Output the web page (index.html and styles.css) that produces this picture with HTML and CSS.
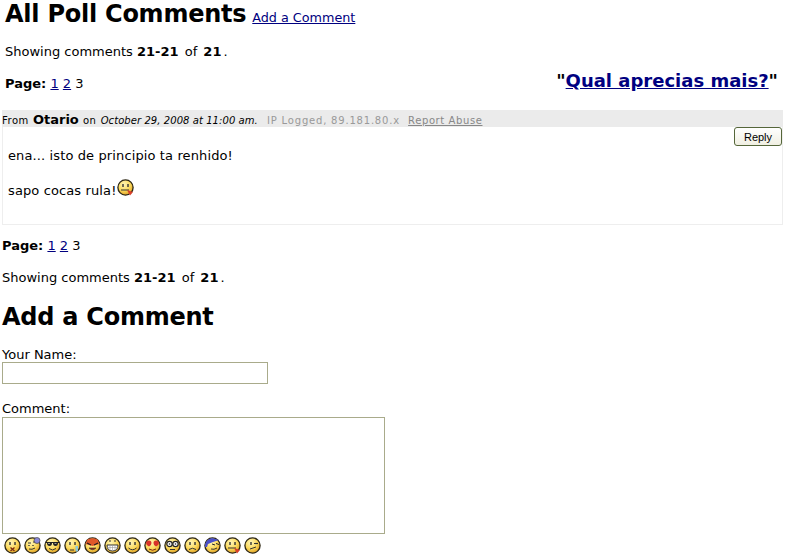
FILE: index.html
```html
<!DOCTYPE html>
<html lang="en">
  <head>
    <meta charset="UTF-8" />
    <title>All Poll Comments</title>
    <link rel="stylesheet" href="styles.css">
  </head>
  <body>
    <svg class="defs" width="0" height="0">
      <defs>
        <radialGradient id="skin" cx="0.4" cy="0.3" r="0.75">
          <stop offset="0" stop-color="#fff6b8" />
          <stop offset="0.55" stop-color="#fbd95c" />
          <stop offset="1" stop-color="#dc9a1e" />
        </radialGradient>
      </defs>
      <symbol id="face" viewBox="0 0 17 17">
        <circle cx="8.5" cy="8.5" r="7.6" fill="url(#skin)" stroke="#2c2614" stroke-width="1.3" />
      </symbol>
    </svg>

    <div class="top">
      <div class="title-row">
        <h1>All Poll Comments</h1>
        <a class="add-link" href="#add">Add a Comment</a>
      </div>
      <p class="showing">Showing comments <b>21-21</b> of <b>21</b>.</p>
      <div class="page-row">
        <p class="pages"><b>Page:</b> <a href="#1">1</a> <a href="#2">2</a> 3</p>
        <h2 class="poll-name">"<a href="#poll">Qual aprecias mais?</a>"</h2>
      </div>
    </div>

    <div class="comment">
      <div class="comment-head">
        <span class="from">From</span> <span class="author">Otario</span> <span class="from">on</span> <i>October 29, 2008 at 11:00 am.</i>
        <span class="ip">IP Logged, 89.181.80.x</span>
        <a class="abuse" href="#abuse">Report Abuse</a>
      </div>
      <div class="comment-body">
        <button class="reply-btn">Reply</button>
        <p>ena... isto de principio ta renhido!</p>
        <p>sapo cocas rula!<svg class="smiley inline" viewBox="0 0 17 17"><use href="#face" /><path d="M6 5v3M11 5v3" stroke="#333" stroke-width="1.4" /><path d="M4 11h8" stroke="#333" /><path d="M10 11l6 2-3 3.500z" fill="#d8402a" /></svg></p>
      </div>
    </div>

    <p class="pages lower"><b>Page:</b> <a href="#1">1</a> <a href="#2">2</a> 3</p>
    <p class="showing lower-showing">Showing comments <b>21-21</b> of <b>21</b>.</p>

    <form class="add-form" id="add">
      <h1>Add a Comment</h1>
      <label class="field-label">Your Name:</label>
      <input class="name-input" type="text" />
      <label class="field-label comment-label">Comment:</label>
      <textarea class="comment-input"></textarea>
      <div class="smileys">
        <svg class="smiley" viewBox="0 0 17 17"><use href="#face" /><path d="M6 5v3M11 5v3" stroke="#333" stroke-width="1.4" /><path d="M6.500 10.500l4 3.500M10.500 10.500l-4 3.500" stroke="#7a2a10" stroke-width="1.300" /></svg>
        <svg class="smiley" viewBox="0 0 17 17"><use href="#face" /><path d="M4 6h3M9 5h2" stroke="#333" /><path d="M5 8v1M9 8v1" stroke="#333" stroke-width="1.400" /><path d="M5 12q3 1 6-1" stroke="#333" fill="none" /><circle cx="13" cy="3.500" r="3" fill="#8a88d8" stroke="#444" stroke-width="0.700" /></svg>
        <svg class="smiley" viewBox="0 0 17 17"><use href="#face" /><path d="M2 5h13v1h-1q0 3-2.500 3t-2.500-3h-1q0 3-2.500 3t-2.500-3h-1z" fill="#222" /><path d="M4 6.500h2M10.500 6.500h2" stroke="#9a9a9a" /><path d="M5 11.500q3.500 3 7 0" stroke="#333" fill="none" /></svg>
        <svg class="smiley" viewBox="0 0 17 17"><use href="#face" /><path d="M6 5v3M11 5v3" stroke="#333" stroke-width="1.400" /><path d="M6 13h4" stroke="#333" /><path d="M11.500 9h2.500v5q-1 1.500-2.500 0z" fill="#8cc8d8" /></svg>
        <svg class="smiley" viewBox="0 0 17 17"><use href="#face" /><path d="M1.500 7l2-4.500q5-2.500 10 0l2 4.500-7 2z" fill="#e0582a" /><path d="M3 6l4 2M14 6l-4 2" stroke="#222" stroke-width="1.300" /><path d="M5 11q3.500 3.500 7 0z" fill="#8e2414" stroke="#333" stroke-width="0.600" /></svg>
        <svg class="smiley" viewBox="0 0 17 17"><use href="#face" /><path d="M5 4h2M10 4h2" stroke="#333" stroke-width="1.200" /><path d="M3 8h11q0 6-5.500 6t-5.500-6z" fill="#fff" stroke="#333" /><path d="M3.500 10.500h10M6 8v5M8.500 8v6M11 8v5" stroke="#999" stroke-width="0.600" /></svg>
        <svg class="smiley" viewBox="0 0 17 17"><use href="#face" /><path d="M6 5v3M11 5v3" stroke="#333" stroke-width="1.400" /><path d="M4.500 11q4 3.500 8 0" stroke="#333" fill="none" /></svg>
        <svg class="smiley" viewBox="0 0 17 17"><use href="#face" /><path d="M5 3.500q2.500 0 2.500 2.500t-2.500 3.500q-3-1.500-3-3.500t3-2.500zM12 3.500q-2.500 0-2.500 2.500t2.500 3.500q3-1.500 3-3.500t-3-2.500z" fill="#d8322a" /><path d="M5 12q3.500 2.500 7 0" stroke="#7a2a10" fill="none" /></svg>
        <svg class="smiley" viewBox="0 0 17 17"><use href="#face" /><circle cx="5.500" cy="7" r="2.700" fill="#fff" stroke="#222" stroke-width="1.200" /><circle cx="11.500" cy="7" r="2.700" fill="#fff" stroke="#222" stroke-width="1.200" /><circle cx="5.500" cy="7" r="0.800" fill="#222" /><circle cx="11.500" cy="7" r="0.800" fill="#222" /><path d="M6 12.500h5" stroke="#333" /></svg>
        <svg class="smiley" viewBox="0 0 17 17"><use href="#face" /><path d="M6 5v3M11 5v3" stroke="#333" stroke-width="1.400" /><path d="M5 12.500q3.500-2.500 7 0" stroke="#333" fill="none" /></svg>
        <svg class="smiley" viewBox="0 0 17 17"><use href="#face" /><path d="M1 10q-.5-7 7-9l7 2-6 2-5 2-1 3z" fill="#4a50c8" /><path d="M8 7l3 1M12 6.500l3 1" stroke="#222" /><path d="M7 12q3 1 6-1" stroke="#333" fill="none" /></svg>
        <svg class="smiley" viewBox="0 0 17 17"><use href="#face" /><path d="M6 5v3M11 5v3" stroke="#333" stroke-width="1.400" /><path d="M4 11h8" stroke="#333" /><path d="M10 11l6 2-3 3.500z" fill="#d8402a" /></svg>
        <svg class="smiley" viewBox="0 0 17 17"><use href="#face" /><path d="M7 5v3" stroke="#333" stroke-width="1.400" /><path d="M10 6.500h4" stroke="#333" stroke-width="1.200" /><path d="M6 12l6-2" stroke="#333" /></svg>
      </div>
    </form>
  </body>
</html>
```

FILE: styles.css
```css
/* Basic Reset */
* {
  margin: 0;
  padding: 0;
  box-sizing: border-box;
}

body {
  width: 785px;
  font-family: "DejaVu Sans", Verdana, sans-serif;
  font-size: 13px;
  color: #000;
  background: #fff;
  overflow: hidden;
}

a {
  color: #000080;
}

h1 {
  font-size: 24px;
  line-height: 28px;
  letter-spacing: -0.25px;
}

.defs {
  position: absolute;
}

.top {
  padding-left: 5px;
}

.title-row {
  display: flex;
  align-items: baseline;
  gap: 6px;
  height: 28px;
}

.add-link {
  font-size: 12.75px;
}

.showing {
  margin-top: 16px;
  line-height: 16px;
}

.showing b {
  margin-right: 2px;
}

.showing b + b {
  margin-left: 2px;
}

.page-row {
  display: flex;
  justify-content: space-between;
  align-items: center;
  margin-top: 11px;
  height: 24px;
}

.poll-name {
  font-size: 18px;
  line-height: 24px;
  margin: -4px 7px 0 0;
}

.comment {
  margin: 15px 2px 0;
  border: 1px solid #eee;
  border-top: 0;
}

.comment-head {
  height: 17px;
  margin: 0 -1px;
  background: #ebebeb;
  font-size: 10px;
  line-height: 19px;
  white-space: nowrap;
}

.from {
  letter-spacing: 0.5px;
}

.author {
  font-size: 13px;
  font-weight: bold;
  margin: 0 1px;
}

.comment-head i {
  letter-spacing: 0.07px;
  margin-left: 1px;
}

.ip {
  margin-left: 6px;
  color: #999;
  letter-spacing: 0.8px;
}

.abuse {
  margin-left: 5px;
  color: #888;
  letter-spacing: 0.6px;
}

.comment-body {
  height: 97px;
  padding: 0 5px;
}

.comment-body p {
  line-height: 16px;
  margin-bottom: 15px;
  letter-spacing: 0.12px;
}

.comment-body p:first-of-type {
  padding-top: 21px;
}

.reply-btn {
  float: right;
  width: 48px;
  height: 19px;
  margin: 0 -5px 0 0;
  border: 1px solid #55663a;
  border-radius: 3px;
  background: linear-gradient(#fff, #f0efe2);
  font-family: "Liberation Sans", sans-serif;
  font-size: 11px;
}

.smiley {
  width: 17px;
  height: 17px;
  flex: none;
}

.smiley.inline {
  vertical-align: -1px;
}

.lower {
  margin: 13px 0 0 2px;
  line-height: 16px;
}

.lower-showing {
  margin: 16px 0 0 2px;
}

.add-form {
  padding-left: 2px;
  margin-top: 17px;
}

.field-label {
  display: block;
  line-height: 15px;
}

.add-form h1 {
  margin-bottom: 16px;
}

.name-input {
  display: block;
  width: 266px;
  height: 22px;
  border: 1px solid #a9ab8b;
}

.comment-label {
  margin-top: 17px;
}

.comment-input {
  display: block;
  width: 383px;
  height: 117px;
  border: 1px solid #a9ab8b;
  resize: none;
  margin-top: 1px;
}

.smileys {
  display: flex;
  gap: 3px;
  margin: 3px 0 0 2px;
}
```
